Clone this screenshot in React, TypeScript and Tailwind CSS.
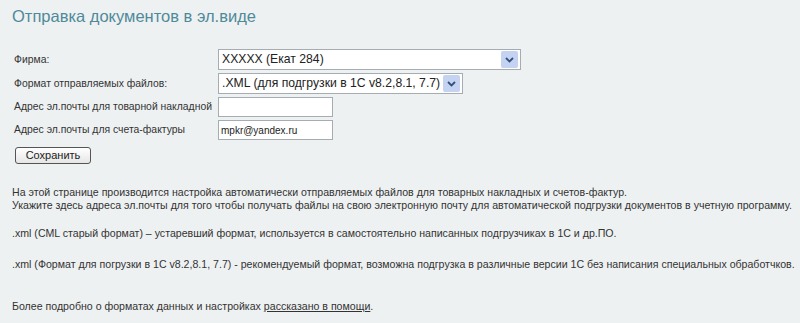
const FONT = "font-['Liberation_Sans','Arial',sans-serif]"

const Chevron = () => (
  <svg width="9" height="6" viewBox="0 0 9 6" fill="none">
    <path d="M1 1l3.5 3.5L8 1" stroke="#34507a" strokeWidth="1.8" />
  </svg>
)

const FakeSelect = ({ value, width }: { value: string; width: string }) => (
  <div className={`flex h-[21px] items-center border border-[#a5acb2] bg-white ${width}`}>
    <span className="flex-1 whitespace-nowrap pl-[3px] text-[12.2px] leading-none text-[#222]">{value}</span>
    <span className="mr-[2px] flex h-[17px] w-[17px] shrink-0 items-center justify-center rounded-[2px] bg-[#c4d3f2]">
      <Chevron />
    </span>
  </div>
)

const FakeInput = ({ value }: { value?: string }) => (
  <div className="flex h-[20px] w-[115px] items-center border border-[#a5acb2] bg-white pl-[2px] text-[10px] text-[#222]">
    {value}
  </div>
)

const rows = [
  { label: "Фирма:", field: <FakeSelect value="XXXXX (Екат 284)" width="w-[303px]" /> },
  { label: "Формат отправляемых файлов:", field: <FakeSelect value=".XML (для подгрузки в 1С v8.2,8.1, 7.7)" width="w-[245px]" /> },
  { label: "Адрес эл.почты для товарной накладной", field: <FakeInput /> },
  { label: "Адрес эл.почты для счета-фактуры", field: <FakeInput value="mpkr@yandex.ru" /> },
]

export default function App() {
  return (
    <div className={`h-[323px] w-[800px] overflow-hidden bg-[#eef1f2] px-3 pt-[5px] text-[10.4px] text-[#333] ${FONT}`}>
      <h1 className="text-[16.5px] leading-[22px] text-[#4f8a99]">Отправка документов в эл.виде</h1>

      <div className="mt-[22px] flex flex-col gap-[3px]">
        {rows.map((row) => (
          <div key={row.label} className="flex items-center">
            <span className="w-[206px] whitespace-nowrap pl-[2px]">{row.label}</span>
            {row.field}
          </div>
        ))}
      </div>

      <button className="ml-[3px] mt-[7px] h-[17px] w-[76px] rounded-[3px] border border-[#555] bg-gradient-to-b from-white to-[#e6e6e6] text-[11px] leading-none text-[#222]">
        Сохранить
      </button>

      <div className="mt-[22px] whitespace-nowrap text-[10.6px] leading-[13px]">
        <p>На этой странице производится настройка автоматически отправляемых файлов для товарных накладных и счетов-фактур.</p>
        <p>Укажите здесь адреса эл.почты для того чтобы получать файлы на свою электронную почту для автоматической подгрузки документов в учетную программу.</p>
        <p className="mt-[15px]">.xml (CML старый формат) – устаревший формат, используется в самостоятельно написанных подгрузчиках в 1С и др.ПО.</p>
        <p className="mt-[18px]">.xml (Формат для погрузки в 1С v8.2,8.1, 7.7) - рекомендуемый формат, возможна подгрузка в различные версии 1С без написания специальных обработчков.</p>
        <p className="mt-[29px]">
          Более подробно о форматах данных и настройках <a className="underline">рассказано в помощи</a>.
        </p>
      </div>
    </div>
  )
}
